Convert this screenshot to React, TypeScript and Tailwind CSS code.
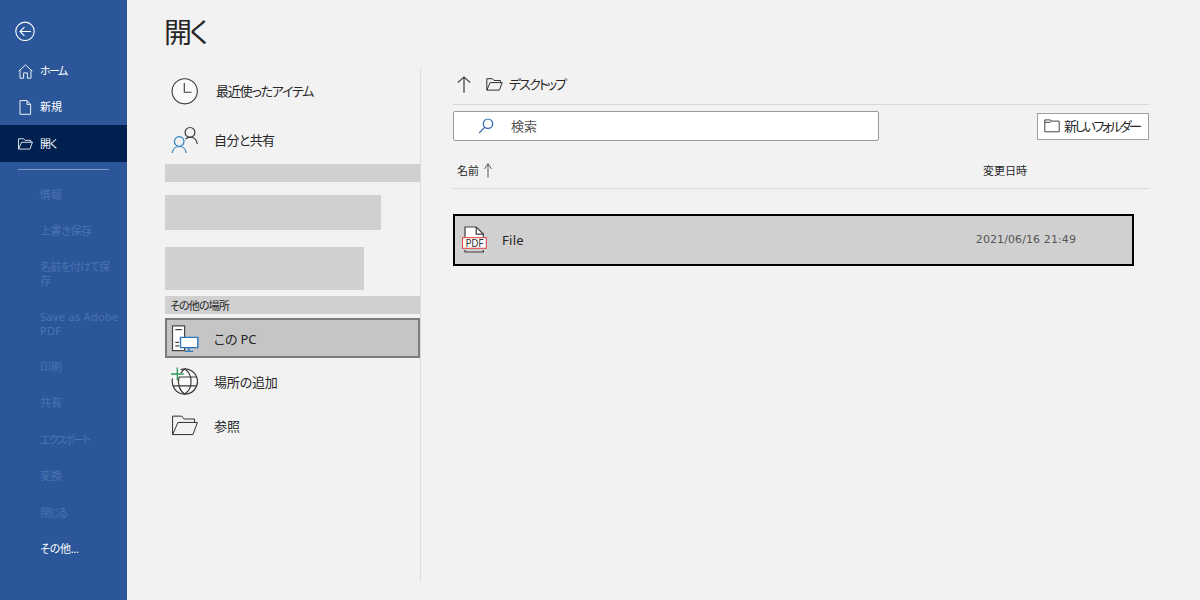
import type { ReactNode } from 'react';
import clsx from 'clsx';

type IconProps = { className?: string };

const HomeIcon = () => (
  <svg width="15" height="15" viewBox="0 0 15 15" fill="none" stroke="currentColor" strokeWidth="0.9">
    <path d="M0.7 7.2 7.5 0.9 14.3 7.2M2 6.2V14.2H5.6V8.9H9.4V14.2H13V6.2" />
  </svg>
);

const NewIcon = () => (
  <svg width="15" height="15" viewBox="0 0 15 15" fill="none" stroke="currentColor" strokeWidth="0.9">
    <path d="M2 0.6H9L12.6 4.4V14.3H2ZM9 0.6V4.4H12.6" />
  </svg>
);

const FolderOpenIcon = ({ className }: IconProps) => (
  <svg className={className} viewBox="0 0 28 22" fill="none" stroke="currentColor">
    <path d="M1 20.5V1.2H10.5L13.2 4.2H24V7.8M1 20.5 6.6 7.8H27L22.3 20.5Z" />
  </svg>
);

const BackIcon = () => (
  <svg width="20" height="20" viewBox="0 0 20 20" fill="none" stroke="currentColor" strokeWidth="1.1">
    <circle cx="10" cy="10.3" r="9.2" />
    <path d="M16 10.5H5.2M9.4 6.2 5 10.5 9.4 14.8" />
  </svg>
);

const ClockIcon = () => (
  <svg width="28" height="28" viewBox="0 0 28 28" fill="#fafafa" stroke="#3b3b3b" strokeWidth="1.1">
    <circle cx="13.7" cy="14.3" r="12.6" />
    <path d="M13.3 6V15.3H20.5" fill="none" />
  </svg>
);

const PeopleIcon = () => (
  <svg width="28" height="28" viewBox="0 0 28 28" fill="none" strokeWidth="1.2">
    <g stroke="#3b3b3b">
      <circle cx="19" cy="6.4" r="4.9" />
      <path d="M14.4 13.1C18.7 9.3 25.3 11.2 26.2 17.8" />
    </g>
    <g stroke="#2b7fc0">
      <circle cx="8.2" cy="15.5" r="4.8" />
      <path d="M1.3 27C2 18.3 14.4 18.3 15.2 27" />
    </g>
  </svg>
);

const ThisPcIcon = () => (
  <svg width="28" height="28" viewBox="0 0 28 28" fill="#fff" strokeWidth="1.2">
    <path d="M1.5 0.8H13.6V25.6H1.5Z" stroke="#484848" />
    <path d="M4.3 4.7H11M4.3 17.4H8M4.3 20.8H8" stroke="#484848" />
    <path d="M9.5 12.4H26.8V22.6H9.5Z" stroke="#2b77c0" strokeWidth="1.4" />
    <path d="M18 22.6V26.4M13.8 26.4H22.2" stroke="#2b77c0" strokeWidth="1.3" />
  </svg>
);

const AddPlaceIcon = () => (
  <svg width="29" height="29" viewBox="0 0 29 29" fill="none" stroke="#3b3b3b" strokeWidth="1.2">
    <circle cx="13.8" cy="14.5" r="12.6" fill="#fafafa" stroke="none" />
    <path d="M9.7 2.6A12.6 12.6 0 1 1 1.6 11.5" />
    <path d="M8 10C6.3 17 8.5 24 13.8 27.1C22.1 21.5 22.1 7.5 13.8 1.9C12 3 10.8 4.4 9.9 6M8 10H25.6M2.1 18.8H25.6" />
    <path d="M0 3H8.5V9H0Z" fill="#f2f2f2" stroke="none" />
    <path d="M6.3 0.5V13.5M0 7H12.8" stroke="#2f9a5d" strokeWidth="1.3" />
  </svg>
);

const ArrowUpIcon = ({ className }: IconProps) => (
  <svg className={className} viewBox="0 0 12 16" preserveAspectRatio="none" fill="none" stroke="#333">
    <path d="M6 15.7V0.9M0.7 6.3 6 0.9 11.3 6.3" />
  </svg>
);

const SearchIcon = () => (
  <svg width="16" height="16" viewBox="0 0 16 16" fill="none" stroke="#2f62a8" strokeWidth="1.2">
    <circle cx="9" cy="5.7" r="4.7" />
    <path d="M5.6 9.3 0 15" />
  </svg>
);

const FolderIcon = () => (
  <svg className="shrink-0" width="16" height="14" viewBox="0 0 16 14" fill="none" stroke="#444">
    <path d="M0.8 12.8V0.9H6.3L7.5 2.1H15.2V12.8ZM0.8 3.3H6.3L7.5 2.1" />
  </svg>
);

const PdfIcon = () => (
  <svg width="26" height="28" viewBox="0 0 26 28" fill="none" stroke="#3e3e3e" strokeWidth="1.2">
    <path d="M3 11V1H14.2L21.3 8.1V11" fill="#fff" />
    <path d="M14.2 1V8.1H21.3" />
    <path d="M3 24V26H21.3V24" />
    <rect x="0.5" y="11.7" width="23.8" height="10.6" fill="#fff" stroke="#e04b4b" strokeWidth="1.1" />
    <text
      x="12.5"
      y="20.7"
      textAnchor="middle"
      fontSize="10"
      fontFamily="'Noto Sans', sans-serif"
      fill="#333"
      stroke="none"
      textLength="18"
    >
      PDF
    </text>
  </svg>
);

const navItems = [
  { label: 'ホーム', icon: <HomeIcon />, className: 'tracking-[-1.6px]' },
  { label: '新規', icon: <NewIcon /> },
  {
    label: '開く',
    icon: <FolderOpenIcon className="h-3 w-[15px] [stroke-width:1.6]" />,
    active: true,
    className: 'tracking-[-1px]',
  },
];

const disabledItems = [
  { label: '情報', className: 'h-[37px]' },
  { label: '上書き保存', className: 'h-9 tracking-[-0.4px]' },
  { label: '名前を付けて保存', className: 'h-[50px] tracking-[-0.8px]' },
  { label: 'Save as Adobe PDF', className: 'h-[50px] tracking-[0.3px]' },
  { label: '印刷', className: 'h-9' },
  { label: '共有', className: 'h-9' },
  { label: 'エクスポート', className: 'h-[37px] tracking-[-1.8px]' },
  { label: '変換', className: 'h-9' },
  { label: '閉じる', className: 'h-[37px] tracking-[-1.4px]' },
];

function Sidebar() {
  return (
    <aside className="flex w-[127px] shrink-0 flex-col bg-[#2b579a] text-[11px] leading-[14px] text-white">
      <div className="flex h-[53px] pl-[15px] pt-[21px]">
        <BackIcon />
      </div>
      {navItems.map((item) => (
        <div
          key={item.label}
          className={clsx('flex items-center gap-[7px] pl-[18px]', item.active ? 'h-[37px] bg-[#002050]' : 'h-9')}
        >
          {item.icon}
          <span className={item.className}>{item.label}</span>
        </div>
      ))}
      <div className="mb-1.5 ml-[18px] mt-[7px] h-px w-[91px] bg-[#7f9cc8]" />
      {disabledItems.map((item) => (
        <div key={item.label} className={clsx('flex items-center pl-10 pr-2 text-[#4a73b0]', item.className)}>
          {item.label}
        </div>
      ))}
      <div className="flex h-9 items-center pl-10 tracking-[-0.3px]">その他...</div>
    </aside>
  );
}

type PlaceProps = { icon: ReactNode; label: string; className?: string; labelClassName?: string };

function Place({ icon, label, className, labelClassName }: PlaceProps) {
  return (
    <div className={clsx('flex items-center pl-1.5 text-[13px] leading-5', className)}>
      <div className="w-[43px] shrink-0">{icon}</div>
      <span className={labelClassName}>{label}</span>
    </div>
  );
}

function Places() {
  return (
    <section className="flex h-[514px] w-64 flex-col border-r border-[#dcdcdc]">
      <Place
        icon={<ClockIcon />}
        label="最近使ったアイテム"
        className="h-12 pb-0.5"
        labelClassName="ml-0.5 tracking-[-1.2px]"
      />
      <Place icon={<PeopleIcon />} label="自分と共有" className="h-12" labelClassName="tracking-[-0.6px]" />
      <div className="h-[18px] bg-[#d0d0d0]" />
      <div className="mt-[13px] h-[35px] w-[216px] bg-[#d0d0d0]" />
      <div className="mt-[17px] h-[43px] w-[199px] bg-[#d0d0d0]" />
      <div className="mt-1.5 flex h-[18px] items-center bg-[#d0d0d0] pl-[5px] pt-0.5 text-[11px] tracking-[-0.9px]">
        その他の場所
      </div>
      <Place
        icon={<ThisPcIcon />}
        label="この PC"
        className="mt-1 h-10 border-2 border-[#7c7c7c] bg-[#c5c5c5] !pl-1 pt-px"
        labelClassName="tracking-[-0.2px]"
      />
      <Place
        icon={<AddPlaceIcon />}
        label="場所の追加"
        className="mt-0.5 h-[43px]"
        labelClassName="tracking-[-0.2px]"
      />
      <Place icon={<FolderOpenIcon className="h-[21px] w-7" />} label="参照" className="h-[45px]" />
    </section>
  );
}

function FileBrowser() {
  return (
    <section className="ml-8 flex w-[696px] flex-col">
      <div className="flex h-[37px] items-center border-b border-[#d8d8d8] pb-1 pl-1">
        <ArrowUpIcon className="h-[17px] w-[14px]" />
        <FolderOpenIcon className="ml-[15px] h-[13px] w-[17px] [stroke-width:1.6]" />
        <span className="ml-1.5 pt-0.5 text-[13px] tracking-[-1.9px]">デスクトップ</span>
      </div>
      <div className="mt-1.5 flex items-center justify-between">
        <div className="flex h-[30px] w-[426px] items-center rounded-[2px] border border-[#9a9a9a] bg-white pl-[25px]">
          <SearchIcon />
          <span className="ml-4 pt-0.5 text-[13px] text-[#555]">検索</span>
        </div>
        <button className="flex h-[27px] w-28 items-center border border-[#a0a0a0] bg-white pl-1.5 text-[13px]">
          <FolderIcon />
          <span className="ml-1 whitespace-nowrap pt-px tracking-[-2.3px]">新しいフォルダー</span>
        </button>
      </div>
      <div className="mt-3 flex h-9 items-center border-b border-[#d8d8d8] pl-1 text-[11px]">
        <span className="w-[27px] pt-px">名前</span>
        <ArrowUpIcon className="h-[15px] w-2" />
        <span className="ml-[491px] pt-px">変更日時</span>
      </div>
      <div className="mt-[25px] flex h-[52px] w-[681px] items-center justify-between border-2 border-black bg-[#d0d0d0] pl-[7px] pr-14">
        <div className="flex items-center gap-[14px]">
          <PdfIcon />
          <span className="pt-0.5 text-[13px] tracking-[0.3px]">File</span>
        </div>
        <span className="font-['DejaVu_Sans',sans-serif] text-[11px] tracking-[0.1px] text-[#555]">
          2021/06/16 21:49
        </span>
      </div>
    </section>
  );
}

export default function App() {
  return (
    <div className="flex h-[600px] w-[1200px] overflow-hidden bg-[#f2f2f2] font-['Noto_Sans','Noto_Sans_CJK_JP',sans-serif] text-[#262626] [font-feature-settings:'palt']">
      <Sidebar />
      <main className="flex flex-col pl-[38px]">
        <h1 className="-ml-px flex h-[68px] items-center pb-[5px] text-[28px] leading-none tracking-[-2.5px]">開く</h1>
        <div className="flex">
          <Places />
          <FileBrowser />
        </div>
      </main>
    </div>
  );
}
